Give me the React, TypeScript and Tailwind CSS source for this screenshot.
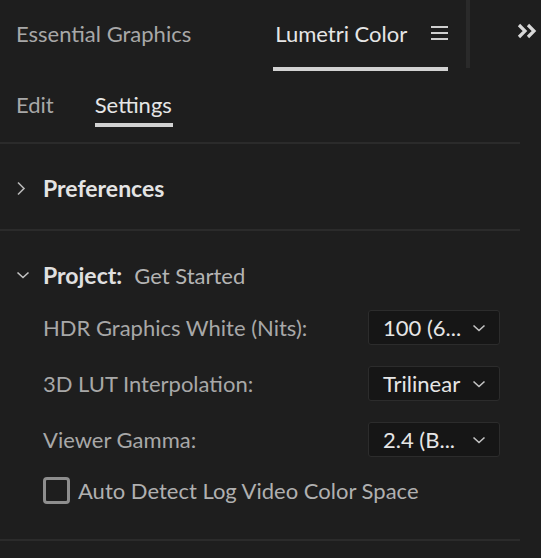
import React from "react";

const labelFont = "font-['Lato','Liberation_Sans',sans-serif]";

function Hamburger() {
  return (
    <svg width="17" height="15" viewBox="0 0 17 15" className="text-[#cfcfcf]">
      <rect x="0" y="0" width="17" height="2" fill="currentColor" />
      <rect x="0" y="6" width="17" height="2" fill="currentColor" />
      <rect x="0" y="12" width="17" height="2" fill="currentColor" />
    </svg>
  );
}

function DoubleChevron() {
  return (
    <svg width="21" height="16" viewBox="0 0 21 16" fill="none" stroke="#d8d8d8" strokeWidth="3.2" strokeLinejoin="miter">
      <path d="M2 2l6 6-6 6" />
      <path d="M11 2l6 6-6 6" />
    </svg>
  );
}

function ChevronRight() {
  return (
    <svg width="10" height="15" viewBox="0 0 10 15" fill="none" stroke="#b8b8b8" strokeWidth="1.6">
      <path d="M2 1.5l6 6-6 6" />
    </svg>
  );
}

function ChevronDown({ className = "" }: { className?: string }) {
  return (
    <svg width="14" height="8" viewBox="0 0 14 8" fill="none" stroke="#c4c4c4" strokeWidth="1.6" className={className}>
      <path d="M1.5 1.5l5.5 5 5.5-5" />
    </svg>
  );
}

function Divider() {
  return <div className="h-[2px] w-[520px] bg-[#2b2b2b]" />;
}

function Dropdown({ value }: { value: string }) {
  return (
    <div className="flex h-[35px] w-[132px] items-center justify-between rounded-[3px] border border-[#2c2c2c] bg-[#161616] pl-[14px] pr-[13px]">
      <span className="text-[22px] leading-none text-[#e6e6e6]">{value}</span>
      <ChevronDown />
    </div>
  );
}

const settings = [
  { label: "HDR Graphics White (Nits):", value: "100 (6..." },
  { label: "3D LUT Interpolation:", value: "Trilinear" },
  { label: "Viewer Gamma:", value: "2.4 (B..." },
];

export default function App() {
  return (
    <div className={`h-[558px] w-[541px] overflow-hidden bg-[#1e1e1e] ${labelFont}`}>
      {/* panel tabs */}
      <div className="flex h-[72px]">
        <div className="flex h-[67px] items-center pl-[16px] text-[22px] text-[#a8a8a8]">
          Essential Graphics
        </div>
        <div className="ml-[82px] flex flex-col">
          <div className="flex h-[67px] items-center gap-[24px] pl-[2px]">
            <span className="text-[22px] text-[#e6e6e6]">Lumetri Color</span>
            <Hamburger />
          </div>
          <div className="h-[4px] bg-[#d2d2d2]" />
        </div>
        <div className="ml-[18px] h-[68px] w-[4px] bg-[#2a2a2a]" />
        <div className="ml-auto flex h-[62px] items-center pr-[3px]">
          <DoubleChevron />
        </div>
      </div>

      {/* Edit / Settings */}
      <div className="flex h-[70px] gap-[41px] pl-[16px]">
        <div className="pt-[19px] text-[22px] leading-[28px] text-[#a8a8a8]">Edit</div>
        <div className="flex flex-col pt-[19px]">
          <span className="text-[22px] leading-[28px] text-[#e6e6e6]">Settings</span>
          <div className="mt-[4px] h-[4px] w-[78px] bg-[#d2d2d2]" />
        </div>
      </div>

      <Divider />

      <div className="flex h-[85px] items-center gap-[17px] pl-[16px] pt-[3px]">
        <ChevronRight />
        <span className="text-[23px] font-bold text-[#e4e4e4]">Preferences</span>
      </div>

      <Divider />

      {/* Project section */}
      <div className="flex flex-col pt-[30px]">
        <div className="flex h-[28px] items-center pl-[16px]">
          <ChevronDown className="mr-[13px]" />
          <span className="text-[23px] font-bold text-[#e0e0e0]">Project:</span>
          <span className="ml-[12px] text-[22px] text-[#b4b4b4]">Get Started</span>
        </div>

        <div className="mt-[21px] flex w-[520px] flex-col gap-[21px] pl-[43px] pr-[20px]">
          {settings.map((s) => (
            <div key={s.label} className="flex items-center justify-between">
              <span className="text-[22px] text-[#a8a8a8]">{s.label}</span>
              <Dropdown value={s.value} />
            </div>
          ))}
        </div>

        <label className="mt-[20px] flex h-[27px] items-center gap-[8px] pl-[43px]">
          <span className="h-[27px] w-[27px] rounded-[4px] border-[3px] border-[#8e8e8e]" />
          <span className="text-[22px] text-[#b0b0b0]">Auto Detect Log Video Color Space</span>
        </label>
      </div>

      <div className="mt-[35px]">
        <Divider />
      </div>
    </div>
  );
}
